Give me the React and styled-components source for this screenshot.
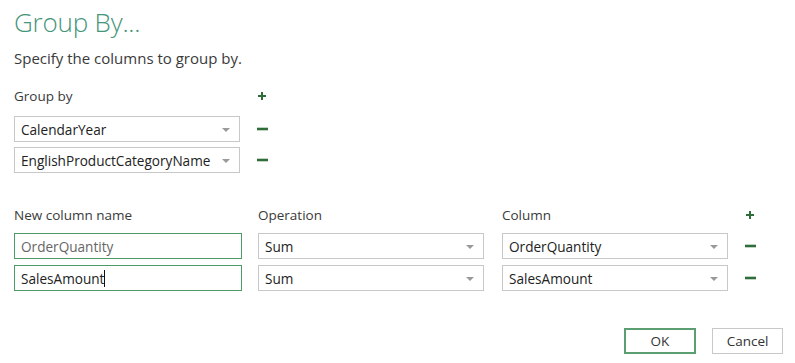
import React from "react";
import styled, { createGlobalStyle } from "styled-components";

const Global = createGlobalStyle`
  body {
    margin: 0;
    background: #fff;
    font-family: "Open Sans", "Noto Sans", sans-serif;
    color: #333;
  }
`

const Dialog = styled.div`
  width: 795px;
  height: 363px;
  box-sizing: border-box;
  padding: 5px 12px 0 14px;
  display: flex;
  flex-direction: column;
`
const Title = styled.h1`
  margin: 0;
  font-size: 26px;
  font-weight: 300;
  line-height: 34px;
  color: #45957a;
  letter-spacing: -0.2px;
`
const Subtitle = styled.p`
  margin: 9px 0 0;
  font-size: 15px;
  line-height: 20px;
  color: #3a3a3a;
`
const GroupGrid = styled.div`
  margin-top: 18px;
  display: grid;
  grid-template-columns: 238px 20px;
  row-gap: 5px;
  align-items: center;
`
const AggGrid = styled.div`
  margin-top: 32px;
  display: grid;
  grid-template-columns: 244px 244px 238px 20px;
  row-gap: 6px;
  align-items: center;
`
const Label = styled.div`
  font-size: 13.5px;
  line-height: 20px;
  color: #3a3a3a;
  margin-bottom: ${p => p.$space || 0}px;
`
const Field = styled.div`
  position: relative;
  width: ${p => p.$w}px;
  height: 26px;
  box-sizing: border-box;
  border: 1px solid ${p => (p.$active ? "#4d9a68" : "#c8c8c8")};
  display: flex;
  align-items: center;
  padding: 0 6px;
  font-size: 13.6px;
  color: ${p => (p.$dim ? "#666" : "#222")};
  background: #fff;
`
const Arrow = styled.span`
  position: absolute;
  right: 9px;
  top: 11px;
  width: 0;
  height: 0;
  border-left: 4px solid transparent;
  border-right: 4px solid transparent;
  border-top: 4px solid #9a9a9a;
`
const Caret = styled.span`
  display: inline-block;
  width: 1px;
  height: 17px;
  background: #111;
`
const IconBtn = styled.div`
  width: 20px;
  height: 20px;
  display: flex;
  align-items: center;
  justify-content: center;
  color: #2f6e3a;
  margin-bottom: ${p => p.$space || 0}px;
`
const Footer = styled.div`
  margin-top: auto;
  margin-bottom: 9px;
  display: flex;
  justify-content: flex-end;
  gap: 16px;
`
const Button = styled.button`
  width: ${p => p.$w}px;
  height: 26px;
  background: #fff;
  border: ${p => (p.$primary ? "2px solid #5a9e72" : "1px solid #c8c8c8")};
  font-family: inherit;
  font-size: 13.5px;
  color: #333;
  padding: 0;
`

const Plus = ({ space }) => (
  <IconBtn $space={space}>
    <svg width="10" height="10" viewBox="0 0 10 10">
      <path d="M5 1v8M1 5h8" stroke="currentColor" strokeWidth="2" />
    </svg>
  </IconBtn>
)
const Minus = () => (
  <IconBtn>
    <svg width="11" height="10" viewBox="0 0 11 10">
      <path d="M0 5h11" stroke="currentColor" strokeWidth="2.6" />
    </svg>
  </IconBtn>
)

const Select = ({ w, children }) => (
  <Field $w={w}>
    {children}
    <Arrow />
  </Field>
)

export default function App() {
  return (
    <>
      <Global />
      <Dialog>
        <Title>Group By...</Title>
        <Subtitle>Specify the columns to group by.</Subtitle>
        <GroupGrid>
          <Label $space={5}>Group by</Label>
          <Plus space={5} />
          <Select w={226}>CalendarYear</Select>
          <Minus />
          <Select w={226}>EnglishProductCategoryName</Select>
          <Minus />
        </GroupGrid>
        <AggGrid>
          <Label $space={2}>New column name</Label>
          <Label $space={2}>Operation</Label>
          <Label $space={2}>Column</Label>
          <Plus space={2} />
          <Field $w={228} $active $dim>OrderQuantity</Field>
          <Select w={226}>Sum</Select>
          <Select w={226}>OrderQuantity</Select>
          <Minus />
          <Field $w={228} $active>SalesAmount<Caret /></Field>
          <Select w={226}>Sum</Select>
          <Select w={226}>SalesAmount</Select>
          <Minus />
        </AggGrid>
        <Footer>
          <Button $w={72} $primary>OK</Button>
          <Button $w={71}>Cancel</Button>
        </Footer>
      </Dialog>
    </>
  );
}
